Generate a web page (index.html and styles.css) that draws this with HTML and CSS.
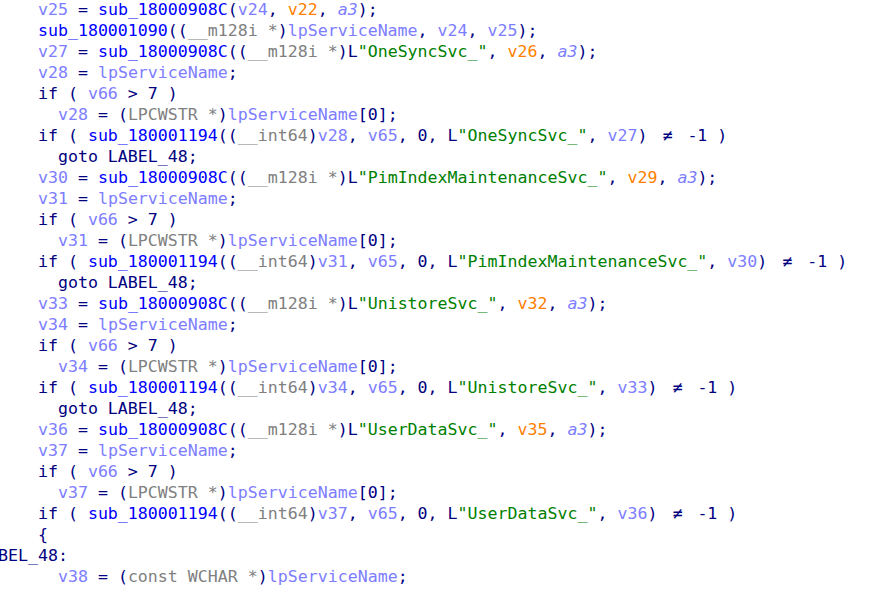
FILE: index.html
```html
<!DOCTYPE html>
<html>
<head>
<meta charset="utf-8">
<link rel="stylesheet" href="styles.css">
</head>
<body>
<div class="code">
<div class="ln i6"><span class="v">v25</span><span class="n"> = </span><span class="f">sub_18000908C</span><span class="n">(</span><span class="v">v24</span><span class="n">, </span><span class="o">v22</span><span class="n">, </span><span class="a">a3</span><span class="n">);</span></div>
<div class="ln i6"><span class="f">sub_180001090</span><span class="n">((</span><span class="t">__m128i *</span><span class="n">)</span><span class="v">lpServiceName</span><span class="n">, </span><span class="v">v24</span><span class="n">, </span><span class="v">v25</span><span class="n">);</span></div>
<div class="ln i6"><span class="v">v27</span><span class="n"> = </span><span class="f">sub_18000908C</span><span class="n">((</span><span class="t">__m128i *</span><span class="n">)L</span><span class="s">"OneSyncSvc_"</span><span class="n">, </span><span class="o">v26</span><span class="n">, </span><span class="a">a3</span><span class="n">);</span></div>
<div class="ln i6"><span class="v">v28</span><span class="n"> = </span><span class="v">lpServiceName</span><span class="n">;</span></div>
<div class="ln i6"><span class="n">if ( </span><span class="v">v66</span><span class="n"> &gt; 7 )</span></div>
<div class="ln i8"><span class="v">v28</span><span class="n"> = (</span><span class="t">LPCWSTR *</span><span class="n">)</span><span class="v">lpServiceName</span><span class="n">[0];</span></div>
<div class="ln i6"><span class="n">if ( </span><span class="f">sub_180001194</span><span class="n">((</span><span class="t">__int64</span><span class="n">)</span><span class="v">v28</span><span class="n">, </span><span class="v">v65</span><span class="n">, 0, L</span><span class="s">"OneSyncSvc_"</span><span class="n">, </span><span class="v">v27</span><span class="n">) <span class="ne">≠</span> -1 )</span></div>
<div class="ln i8"><span class="n">goto LABEL_48;</span></div>
<div class="ln i6"><span class="v">v30</span><span class="n"> = </span><span class="f">sub_18000908C</span><span class="n">((</span><span class="t">__m128i *</span><span class="n">)L</span><span class="s">"PimIndexMaintenanceSvc_"</span><span class="n">, </span><span class="o">v29</span><span class="n">, </span><span class="a">a3</span><span class="n">);</span></div>
<div class="ln i6"><span class="v">v31</span><span class="n"> = </span><span class="v">lpServiceName</span><span class="n">;</span></div>
<div class="ln i6"><span class="n">if ( </span><span class="v">v66</span><span class="n"> &gt; 7 )</span></div>
<div class="ln i8"><span class="v">v31</span><span class="n"> = (</span><span class="t">LPCWSTR *</span><span class="n">)</span><span class="v">lpServiceName</span><span class="n">[0];</span></div>
<div class="ln i6"><span class="n">if ( </span><span class="f">sub_180001194</span><span class="n">((</span><span class="t">__int64</span><span class="n">)</span><span class="v">v31</span><span class="n">, </span><span class="v">v65</span><span class="n">, 0, L</span><span class="s">"PimIndexMaintenanceSvc_"</span><span class="n">, </span><span class="v">v30</span><span class="n">) <span class="ne">≠</span> -1 )</span></div>
<div class="ln i8"><span class="n">goto LABEL_48;</span></div>
<div class="ln i6"><span class="v">v33</span><span class="n"> = </span><span class="f">sub_18000908C</span><span class="n">((</span><span class="t">__m128i *</span><span class="n">)L</span><span class="s">"UnistoreSvc_"</span><span class="n">, </span><span class="o">v32</span><span class="n">, </span><span class="a">a3</span><span class="n">);</span></div>
<div class="ln i6"><span class="v">v34</span><span class="n"> = </span><span class="v">lpServiceName</span><span class="n">;</span></div>
<div class="ln i6"><span class="n">if ( </span><span class="v">v66</span><span class="n"> &gt; 7 )</span></div>
<div class="ln i8"><span class="v">v34</span><span class="n"> = (</span><span class="t">LPCWSTR *</span><span class="n">)</span><span class="v">lpServiceName</span><span class="n">[0];</span></div>
<div class="ln i6"><span class="n">if ( </span><span class="f">sub_180001194</span><span class="n">((</span><span class="t">__int64</span><span class="n">)</span><span class="v">v34</span><span class="n">, </span><span class="v">v65</span><span class="n">, 0, L</span><span class="s">"UnistoreSvc_"</span><span class="n">, </span><span class="v">v33</span><span class="n">) <span class="ne">≠</span> -1 )</span></div>
<div class="ln i8"><span class="n">goto LABEL_48;</span></div>
<div class="ln i6"><span class="v">v36</span><span class="n"> = </span><span class="f">sub_18000908C</span><span class="n">((</span><span class="t">__m128i *</span><span class="n">)L</span><span class="s">"UserDataSvc_"</span><span class="n">, </span><span class="o">v35</span><span class="n">, </span><span class="a">a3</span><span class="n">);</span></div>
<div class="ln i6"><span class="v">v37</span><span class="n"> = </span><span class="v">lpServiceName</span><span class="n">;</span></div>
<div class="ln i6"><span class="n">if ( </span><span class="v">v66</span><span class="n"> &gt; 7 )</span></div>
<div class="ln i8"><span class="v">v37</span><span class="n"> = (</span><span class="t">LPCWSTR *</span><span class="n">)</span><span class="v">lpServiceName</span><span class="n">[0];</span></div>
<div class="ln i6"><span class="n">if ( </span><span class="f">sub_180001194</span><span class="n">((</span><span class="t">__int64</span><span class="n">)</span><span class="v">v37</span><span class="n">, </span><span class="v">v65</span><span class="n">, 0, L</span><span class="s">"UserDataSvc_"</span><span class="n">, </span><span class="v">v36</span><span class="n">) <span class="ne">≠</span> -1 )</span></div>
<div class="ln i6"><span class="n">{</span></div>
<div class="ln i0"><span class="n">LABEL_48:</span></div>
<div class="ln i8"><span class="v">v38</span><span class="n"> = (</span><span class="t">const WCHAR *</span><span class="n">)</span><span class="v">lpServiceName</span><span class="n">;</span></div>
</div>
</body>
</html>
```
FILE: styles.css
```css
html, body {
  margin: 0;
  padding: 0;
  background: #ffffff;
  overflow: hidden;
}
.code {
  margin-left: -22px;
  margin-top: -1px;
  font-family: "DejaVu Sans Mono", "Liberation Mono", monospace;
  font-size: 16.6px;
  line-height: 21px;
  color: #000080;
}
.ln {
  white-space: pre;
  height: 21px;
}
.i0 { padding-left: 0; }
.i6 { padding-left: 6ch; }
.i8 { padding-left: 8ch; }
.n { color: #000080; }
.f { color: #0000ff; }
.v { color: #7d7dff; }
.o { color: #ff8000; }
.a { color: #7d7dff; font-style: italic; }
.t { color: #808080; }
.s { color: #008000; }
.ne {
  display: inline-block;
  width: 2ch;
  text-align: center;
}
```
